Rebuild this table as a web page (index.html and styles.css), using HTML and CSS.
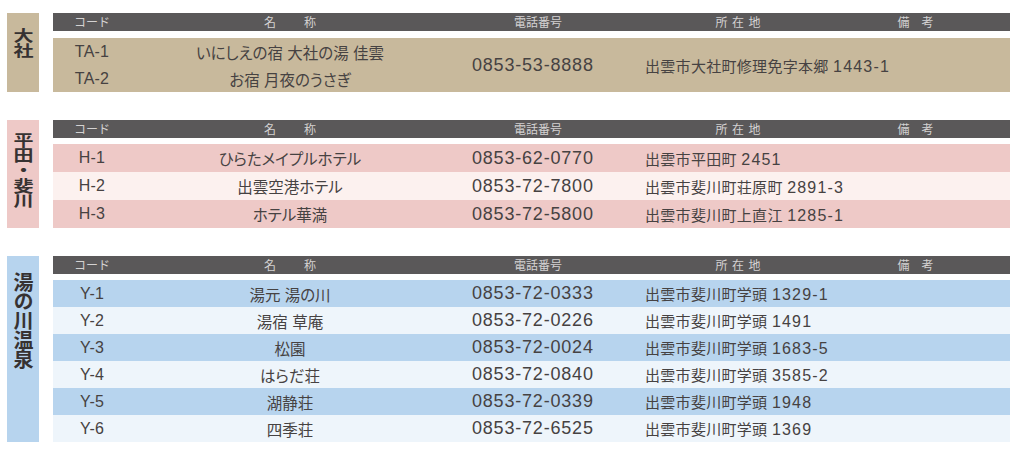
FILE: index.html
```html
<!DOCTYPE html>
<html lang="ja">
<head>
<meta charset="utf-8">
<title>宿泊施設一覧</title>
<link rel="stylesheet" href="styles.css">
</head>
<body>
<div class="page">

  <section class="area s1">
    <div class="side"><span class="label">大社</span></div>
    <div class="table">
      <div class="thead">
        <span>コード</span><span class="h-name">名　称</span><span>電話番号</span><span class="h-addr">所在地</span><span class="h-note">備　考</span>
      </div>
      <div class="tbody merged">
        <span class="c-code r1">TA-1</span>
        <span class="c-name r1">いにしえの宿 大社の湯 佳雲</span>
        <span class="c-phone span2">0853-53-8888</span>
        <span class="c-addr span2">出雲市大社町修理免字本郷 <span class="num">1443-1</span></span>
        <span class="c-note span2"></span>
        <span class="c-code r2">TA-2</span>
        <span class="c-name r2">お宿 月夜のうさぎ</span>
      </div>
    </div>
  </section>

  <section class="area s2">
    <div class="side"><span class="label">平田・斐川</span></div>
    <div class="table">
      <div class="thead">
        <span>コード</span><span class="h-name">名　称</span><span>電話番号</span><span class="h-addr">所在地</span><span class="h-note">備　考</span>
      </div>
      <div class="tbody">
        <div class="row dk"><span class="c-code">H-1</span><span class="c-name">ひらたメイプルホテル</span><span class="c-phone">0853-62-0770</span><span class="c-addr">出雲市平田町 <span class="num">2451</span></span><span class="c-note"></span></div>
        <div class="row lt"><span class="c-code">H-2</span><span class="c-name">出雲空港ホテル</span><span class="c-phone">0853-72-7800</span><span class="c-addr">出雲市斐川町荘原町 <span class="num">2891-3</span></span><span class="c-note"></span></div>
        <div class="row dk"><span class="c-code">H-3</span><span class="c-name">ホテル華満</span><span class="c-phone">0853-72-5800</span><span class="c-addr">出雲市斐川町上直江 <span class="num">1285-1</span></span><span class="c-note"></span></div>
      </div>
    </div>
  </section>

  <section class="area s3">
    <div class="side"><span class="label">湯の川温泉</span></div>
    <div class="table">
      <div class="thead">
        <span>コード</span><span class="h-name">名　称</span><span>電話番号</span><span class="h-addr">所在地</span><span class="h-note">備　考</span>
      </div>
      <div class="tbody">
        <div class="row dk"><span class="c-code">Y-1</span><span class="c-name">湯元 湯の川</span><span class="c-phone">0853-72-0333</span><span class="c-addr">出雲市斐川町学頭 <span class="num">1329-1</span></span><span class="c-note"></span></div>
        <div class="row lt"><span class="c-code">Y-2</span><span class="c-name">湯宿 草庵</span><span class="c-phone">0853-72-0226</span><span class="c-addr">出雲市斐川町学頭 <span class="num">1491</span></span><span class="c-note"></span></div>
        <div class="row dk"><span class="c-code">Y-3</span><span class="c-name">松園</span><span class="c-phone">0853-72-0024</span><span class="c-addr">出雲市斐川町学頭 <span class="num">1683-5</span></span><span class="c-note"></span></div>
        <div class="row lt"><span class="c-code">Y-4</span><span class="c-name">はらだ荘</span><span class="c-phone">0853-72-0840</span><span class="c-addr">出雲市斐川町学頭 <span class="num">3585-2</span></span><span class="c-note"></span></div>
        <div class="row dk"><span class="c-code">Y-5</span><span class="c-name">湖静荘</span><span class="c-phone">0853-72-0339</span><span class="c-addr">出雲市斐川町学頭 <span class="num">1948</span></span><span class="c-note"></span></div>
        <div class="row lt"><span class="c-code">Y-6</span><span class="c-name">四季荘</span><span class="c-phone">0853-72-6525</span><span class="c-addr">出雲市斐川町学頭 <span class="num">1369</span></span><span class="c-note"></span></div>
      </div>
    </div>
  </section>

</div>
</body>
</html>
```

FILE: styles.css
```css
html, body {
  margin: 0;
  padding: 0;
  background: #ffffff;
}

body {
  font-family: "Liberation Sans", "Noto Sans CJK JP", sans-serif;
  color: #464242;
}

.page {
  padding: 13px 14px 0 7px;
}

.area {
  display: flex;
  gap: 14px;
}

.area + .area {
  margin-top: 28px;
}

.side {
  width: 32px;
  flex: none;
  contain: size;
  display: flex;
  justify-content: center;
  align-items: flex-start;
  padding-top: 14px;
  box-sizing: border-box;
}

.label {
  writing-mode: vertical-rl;
  text-orientation: upright;
  white-space: nowrap;
  font-family: "Noto Sans CJK JP", sans-serif;
  font-weight: 700;
  font-size: 20px;
  line-height: 22px;
  letter-spacing: 0;
  color: #363232;
  transform-origin: 50% 0;
}

.s1 .side { background: #c8b99c; padding-top: 15px; }
.s1 .label { transform: scaleY(0.75); }
.s2 .side { background: #eec9c7; padding-top: 12px; }
.s2 .label { transform: scaleY(0.77); }
.s3 .side { background: #b7d4ee; padding-top: 16px; }
.s3 .label { letter-spacing: -0.6px; }

.table {
  flex: 1;
  min-width: 0;
}

.thead,
.row,
.merged {
  display: grid;
  grid-template-columns: 78px 318px 178px 222px 1fr;
}

.thead {
  height: 18px;
  background: #5a5859;
  color: #d4d2d2;
  font-family: "Noto Sans CJK JP", sans-serif;
  font-size: 12px;
  line-height: 18px;
  text-align: center;
}

.h-name {
  letter-spacing: 8px;
  padding-left: 8px;
}

.h-addr {
  letter-spacing: 4.5px;
  padding-left: 4.5px;
}

.h-note {
  padding-right: 28px;
}

.tbody {
  margin-top: 6px;
}

.s1 .tbody {
  margin-top: 7px;
}

.merged {
  grid-template-rows: 27px 27px;
  background: #c8b99c;
  align-items: center;
}

.merged .c-code { grid-column: 1; }
.merged .c-name { grid-column: 2; }
.merged .r1 { grid-row: 1; }
.merged .r2 { grid-row: 2; }
.merged .span2 { grid-row: 1 / 3; }

.row {
  height: 27px;
  align-items: center;
}

.s2 .row { height: 28px; }

.s2 .dk { background: #eec9c7; }
.s2 .lt { background: #fcf1ef; }
.s3 .dk { background: #b7d4ee; }
.s3 .lt { background: #eef5fb; }

.c-code {
  text-align: center;
  font-size: 16px;
  letter-spacing: 0.2px;
}

.c-name {
  text-align: center;
  font-size: 15.5px;
  font-feature-settings: "palt";
  white-space: nowrap;
}

.c-phone {
  padding-left: 23px;
  font-size: 18px;
  letter-spacing: 0.8px;
}

.c-addr {
  padding-left: 18px;
  font-size: 15px;
  letter-spacing: 0.3px;
  white-space: nowrap;
}

.num {
  font-size: 16px;
  letter-spacing: 1.2px;
}
```
